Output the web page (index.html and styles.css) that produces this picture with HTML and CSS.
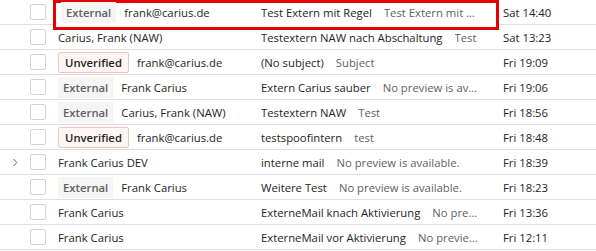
FILE: index.html
```html
<!DOCTYPE html>
<html lang="en">
<head>
  <meta charset="UTF-8">
  <title>Inbox</title>
  <link rel="stylesheet" href="styles.css">
</head>
<body>

  <div class="list">
    <div class="flag-box"></div>

    <div class="row row--flagged">
      <div class="expand"></div>
      <div class="check"><span class="box"></span></div>
      <div class="sender"><span class="badge">External</span>frank@carius.de</div>
      <div class="subject"><span class="title">Test Extern mit Regel</span><span class="preview">Test Extern mit Regel</span></div>
      <div class="date">Sat 14:40</div>
    </div>

    <div class="row">
      <div class="expand"></div>
      <div class="check"><span class="box"></span></div>
      <div class="sender">Carius, Frank (NAW)</div>
      <div class="subject"><span class="title">Testextern NAW nach Abschaltung</span><span class="preview">Test</span></div>
      <div class="date">Sat 13:23</div>
    </div>

    <div class="row">
      <div class="expand"></div>
      <div class="check"><span class="box"></span></div>
      <div class="sender"><span class="badge badge--warn">Unverified</span>frank@carius.de</div>
      <div class="subject"><span class="title">(No subject)</span><span class="preview">Subject</span></div>
      <div class="date">Fri 19:09</div>
    </div>

    <div class="row">
      <div class="expand"></div>
      <div class="check"><span class="box"></span></div>
      <div class="sender"><span class="badge">External</span>Frank Carius</div>
      <div class="subject"><span class="title">Extern Carius sauber</span><span class="preview">No preview is available.</span></div>
      <div class="date">Fri 19:06</div>
    </div>

    <div class="row">
      <div class="expand"></div>
      <div class="check"><span class="box"></span></div>
      <div class="sender"><span class="badge">External</span>Carius, Frank (NAW)</div>
      <div class="subject"><span class="title">Testextern NAW</span><span class="preview">Test</span></div>
      <div class="date">Fri 18:56</div>
    </div>

    <div class="row">
      <div class="expand"></div>
      <div class="check"><span class="box"></span></div>
      <div class="sender"><span class="badge badge--warn">Unverified</span>frank@carius.de</div>
      <div class="subject"><span class="title">testspoofintern</span><span class="preview">test</span></div>
      <div class="date">Fri 18:48</div>
    </div>

    <div class="row">
      <div class="expand">
        <svg width="6" height="9" viewBox="0 0 6 9"><path d="M1.5 1 L4.8 4.5 L1.5 8" fill="none" stroke="#616161" stroke-width="1"/></svg>
      </div>
      <div class="check"><span class="box"></span></div>
      <div class="sender">Frank Carius DEV</div>
      <div class="subject"><span class="title">interne mail</span><span class="preview">No preview is available.</span></div>
      <div class="date">Fri 18:39</div>
    </div>

    <div class="row">
      <div class="expand"></div>
      <div class="check"><span class="box"></span></div>
      <div class="sender"><span class="badge">External</span>Frank Carius</div>
      <div class="subject"><span class="title">Weitere Test</span><span class="preview">No preview is available.</span></div>
      <div class="date">Fri 18:23</div>
    </div>

    <div class="row">
      <div class="expand"></div>
      <div class="check"><span class="box"></span></div>
      <div class="sender">Frank Carius</div>
      <div class="subject"><span class="title">ExterneMail knach Aktivierung</span><span class="preview">No preview is available.</span></div>
      <div class="date">Fri 13:36</div>
    </div>

    <div class="row">
      <div class="expand"></div>
      <div class="check"><span class="box"></span></div>
      <div class="sender">Frank Carius</div>
      <div class="subject"><span class="title">ExterneMail vor Aktivierung</span><span class="preview">No preview is available.</span></div>
      <div class="date">Fri 12:11</div>
    </div>
  </div>

</body>
</html>
```

FILE: styles.css
```css
* {
  margin: 0;
  padding: 0;
  box-sizing: border-box;
}

body {
  font-family: 'Open Sans', sans-serif;
  font-size: 11.3px;
  background-color: #fff;
  color: #242424;
}

.list {
  position: relative;
  width: 596px;
}

/* red annotation frame round the first message */
.flag-box {
  position: absolute;
  left: 53px;
  top: 0;
  width: 446px;
  height: 30px;
  border: 3px solid #e60000;
  background-color: #fff;
  z-index: 1;
}

.row {
  display: grid;
  grid-template-columns: 30px 28px 203px 241px 1fr;
  align-items: center;
  height: 25px;
  border-bottom: 1px solid #e1dfdd;
  white-space: nowrap;
}

.row--flagged > * {
  position: relative;
  z-index: 2;
}

.row--flagged .sender {
  padding-left: 3px;
}

.expand {
  display: flex;
  justify-content: center;
}

.check {
  display: flex;
  align-items: center;
}

.box {
  width: 16px;
  height: 16px;
  border: 1px solid #d1d1d1;
  border-radius: 2px;
}

.sender {
  display: flex;
  align-items: center;
  gap: 8px;
  overflow: hidden;
}

.badge {
  display: inline-block;
  height: 21px;
  line-height: 21px;
  padding: 0 5px;
  font-weight: 600;
  color: #616161;
  background-color: #f5f5f5;
}

.badge--warn {
  color: #242424;
  line-height: 19px;
  padding: 0 6px;
  background-color: #fdf6f4;
  border: 1px solid #f4c5b6;
  border-radius: 2px;
}

.subject {
  display: flex;
  gap: 12px;
  padding-right: 21px;
  overflow: hidden;
}

.title {
  flex: none;
}

.preview {
  color: #616161;
  overflow: hidden;
  text-overflow: ellipsis;
  min-width: 0;
}

.date {
  padding-left: 1px;
}
```
